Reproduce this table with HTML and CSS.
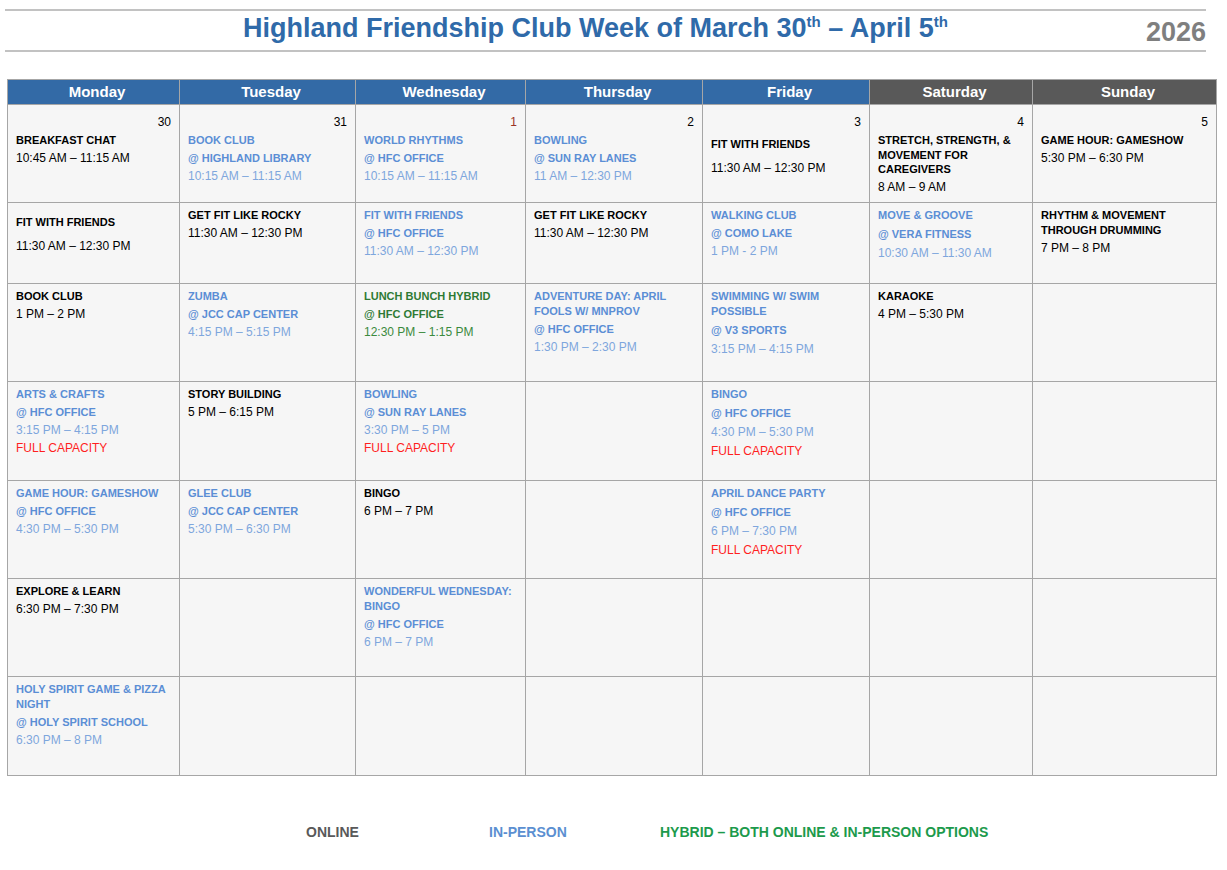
FILE: index.html
```html
<!DOCTYPE html>
<html>
<head>
<meta charset="utf-8">
<title>Highland Friendship Club</title>
<link rel="stylesheet" href="styles.css">
</head>
<body>
<div class="page">
  <header class="masthead">
    <h1 class="title">Highland Friendship Club Week of March 30<sup>th</sup> – April 5<sup>th</sup></h1>
    <div class="year">2026</div>
  </header>

  <div class="cal">
    <div class="hd">Monday</div>
    <div class="hd">Tuesday</div>
    <div class="hd">Wednesday</div>
    <div class="hd">Thursday</div>
    <div class="hd">Friday</div>
    <div class="hd we">Saturday</div>
    <div class="hd we">Sunday</div>

    <!-- row 1 -->
    <div class="cell"><div class="date">30</div><p class="t">BREAKFAST CHAT</p><p class="tm">10:45 AM – 11:15 AM</p></div>
    <div class="cell ip"><div class="date">31</div><p class="t">BOOK CLUB</p><p class="l">@ HIGHLAND LIBRARY</p><p class="tm">10:15 AM – 11:15 AM</p></div>
    <div class="cell ip"><div class="date red">1</div><p class="t">WORLD RHYTHMS</p><p class="l">@ HFC OFFICE</p><p class="tm">10:15 AM – 11:15 AM</p></div>
    <div class="cell ip"><div class="date">2</div><p class="t">BOWLING</p><p class="l">@ SUN RAY LANES</p><p class="tm">11 AM – 12:30 PM</p></div>
    <div class="cell"><div class="date">3</div><p class="t drop gap">FIT WITH FRIENDS</p><p class="tm">11:30 AM – 12:30 PM</p></div>
    <div class="cell"><div class="date">4</div><p class="t">STRETCH, STRENGTH, &amp;<br>MOVEMENT FOR<br>CAREGIVERS</p><p class="tm">8 AM – 9 AM</p></div>
    <div class="cell"><div class="date">5</div><p class="t">GAME HOUR: GAMESHOW</p><p class="tm">5:30 PM – 6:30 PM</p></div>

    <!-- row 2 -->
    <div class="cell"><p class="t drop gap">FIT WITH FRIENDS</p><p class="tm">11:30 AM – 12:30 PM</p></div>
    <div class="cell"><p class="t">GET FIT LIKE ROCKY</p><p class="tm">11:30 AM – 12:30 PM</p></div>
    <div class="cell ip"><p class="t">FIT WITH FRIENDS</p><p class="l">@ HFC OFFICE</p><p class="tm">11:30 AM – 12:30 PM</p></div>
    <div class="cell"><p class="t">GET FIT LIKE ROCKY</p><p class="tm">11:30 AM – 12:30 PM</p></div>
    <div class="cell ip"><p class="t">WALKING CLUB</p><p class="l">@ COMO LAKE</p><p class="tm">1 PM - 2 PM</p></div>
    <div class="cell ip loose"><p class="t">MOVE &amp; GROOVE</p><p class="l">@ VERA FITNESS</p><p class="tm">10:30 AM – 11:30 AM</p></div>
    <div class="cell"><p class="t">RHYTHM &amp; MOVEMENT<br>THROUGH DRUMMING</p><p class="tm">7 PM – 8 PM</p></div>

    <!-- row 3 -->
    <div class="cell"><p class="t">BOOK CLUB</p><p class="tm">1 PM – 2 PM</p></div>
    <div class="cell ip"><p class="t">ZUMBA</p><p class="l">@ JCC CAP CENTER</p><p class="tm">4:15 PM – 5:15 PM</p></div>
    <div class="cell hy"><p class="t">LUNCH BUNCH HYBRID</p><p class="l">@ HFC OFFICE</p><p class="tm">12:30 PM – 1:15 PM</p></div>
    <div class="cell ip"><p class="t">ADVENTURE DAY: APRIL<br>FOOLS W/ MNPROV</p><p class="l">@ HFC OFFICE</p><p class="tm">1:30 PM – 2:30 PM</p></div>
    <div class="cell ip loose"><p class="t">SWIMMING W/ SWIM<br>POSSIBLE</p><p class="l">@ V3 SPORTS</p><p class="tm">3:15 PM – 4:15 PM</p></div>
    <div class="cell"><p class="t">KARAOKE</p><p class="tm">4 PM – 5:30 PM</p></div>
    <div class="cell"></div>

    <!-- row 4 -->
    <div class="cell ip"><p class="t">ARTS &amp; CRAFTS</p><p class="l">@ HFC OFFICE</p><p class="tm">3:15 PM – 4:15 PM</p><p class="full">FULL CAPACITY</p></div>
    <div class="cell"><p class="t">STORY BUILDING</p><p class="tm">5 PM – 6:15 PM</p></div>
    <div class="cell ip"><p class="t">BOWLING</p><p class="l">@ SUN RAY LANES</p><p class="tm">3:30 PM – 5 PM</p><p class="full">FULL CAPACITY</p></div>
    <div class="cell"></div>
    <div class="cell ip loose"><p class="t">BINGO</p><p class="l">@ HFC OFFICE</p><p class="tm">4:30 PM – 5:30 PM</p><p class="full">FULL CAPACITY</p></div>
    <div class="cell"></div>
    <div class="cell"></div>

    <!-- row 5 -->
    <div class="cell ip"><p class="t">GAME HOUR: GAMESHOW</p><p class="l">@ HFC OFFICE</p><p class="tm">4:30 PM – 5:30 PM</p></div>
    <div class="cell ip"><p class="t">GLEE CLUB</p><p class="l">@ JCC CAP CENTER</p><p class="tm">5:30 PM – 6:30 PM</p></div>
    <div class="cell"><p class="t">BINGO</p><p class="tm">6 PM – 7 PM</p></div>
    <div class="cell"></div>
    <div class="cell ip loose"><p class="t">APRIL DANCE PARTY</p><p class="l">@ HFC OFFICE</p><p class="tm">6 PM – 7:30 PM</p><p class="full">FULL CAPACITY</p></div>
    <div class="cell"></div>
    <div class="cell"></div>

    <!-- row 6 -->
    <div class="cell"><p class="t">EXPLORE &amp; LEARN</p><p class="tm">6:30 PM – 7:30 PM</p></div>
    <div class="cell"></div>
    <div class="cell ip"><p class="t">WONDERFUL WEDNESDAY:<br>BINGO</p><p class="l">@ HFC OFFICE</p><p class="tm">6 PM – 7 PM</p></div>
    <div class="cell"></div>
    <div class="cell"></div>
    <div class="cell"></div>
    <div class="cell"></div>

    <!-- row 7 -->
    <div class="cell ip"><p class="t">HOLY SPIRIT GAME &amp; PIZZA<br>NIGHT</p><p class="l">@ HOLY SPIRIT SCHOOL</p><p class="tm">6:30 PM – 8 PM</p></div>
    <div class="cell"></div>
    <div class="cell"></div>
    <div class="cell"></div>
    <div class="cell"></div>
    <div class="cell"></div>
    <div class="cell"></div>
  </div>

  <div class="legend">
    <span class="lg-online">ONLINE</span>
    <span class="lg-inperson">IN-PERSON</span>
    <span class="lg-hybrid">HYBRID – BOTH ONLINE &amp; IN-PERSON OPTIONS</span>
  </div>
</div>
</body>
</html>
```

FILE: styles.css
```css
html, body {
  margin: 0;
  padding: 0;
  background: #ffffff;
}

body {
  font-family: "Liberation Sans", Arial, sans-serif;
  color: #000;
}

.page {
  padding-top: 9px;
}

.masthead {
  display: flex;
  height: 39px;
  margin: 0 21px 0 5px;
  border-top: 2px solid #c2c2c2;
  border-bottom: 2px solid #c2c2c2;
}

.title {
  flex: 1;
  margin: 0;
  padding-left: 40px;
  text-align: center;
  font-size: 27px;
  line-height: 34px;
  font-weight: bold;
  color: #2f6aa9;
  white-space: nowrap;
}

.title sup {
  font-size: 15px;
  line-height: 0;
  vertical-align: 10px;
}

.year {
  font-size: 27px;
  font-weight: bold;
  color: #7f7f7f;
  line-height: 38px;
  padding-top: 2px;
}

.cal {
  display: grid;
  width: max-content;
  margin: 27px 0 0 7px;
  grid-template-columns: 171px 175px 169px 176px 166px 162px 183px;
  grid-template-rows: 24px 97px 80px 97px 98px 97px 97px 98px;
  gap: 1px;
  padding: 1px;
  background: #a6a6a6;
}

.hd {
  background: #336aa6;
  color: #ffffff;
  font-weight: bold;
  font-size: 15px;
  line-height: 24px;
  text-align: center;
  padding-left: 7px;
}

.hd.we {
  background: #595959;
}

.cell {
  background: #f6f6f6;
  padding: 5px 8px 0 8px;
  font-size: 11px;
  overflow: hidden;
}

.cell p {
  margin: 0 0 3.5px 0;
  line-height: 14.5px;
  white-space: nowrap;
}

.cell.loose p {
  margin-bottom: 4.5px;
}

.date {
  text-align: right;
  font-size: 12px;
  line-height: 14.5px;
  margin: 5px 0 3.5px 0;
}

.date.red {
  color: #9a3324;
}

.t {
  font-weight: bold;
}

.cell p.drop {
  margin-top: 7px;
}

.cell p.gap {
  margin-bottom: 9.5px;
}

.l {
  font-weight: bold;
}

.tm {
  font-size: 12px;
}

.full {
  font-size: 12px;
  color: #ff1f1f;
}

.ip .t,
.ip .l {
  color: #5b8ed5;
}

.ip .tm {
  color: #7ea6dd;
}

.hy .t,
.hy .l {
  color: #2e7a34;
}

.hy .tm {
  color: #3b8a3d;
}

.legend {
  display: grid;
  grid-template-columns: 183px 171px auto;
  margin: 48px 0 0 306px;
  font-size: 14px;
  line-height: 17px;
  font-weight: bold;
}

.lg-online {
  color: #595959;
}

.lg-inperson {
  color: #5b8fd1;
}

.lg-hybrid {
  color: #1c9a4c;
}
```
